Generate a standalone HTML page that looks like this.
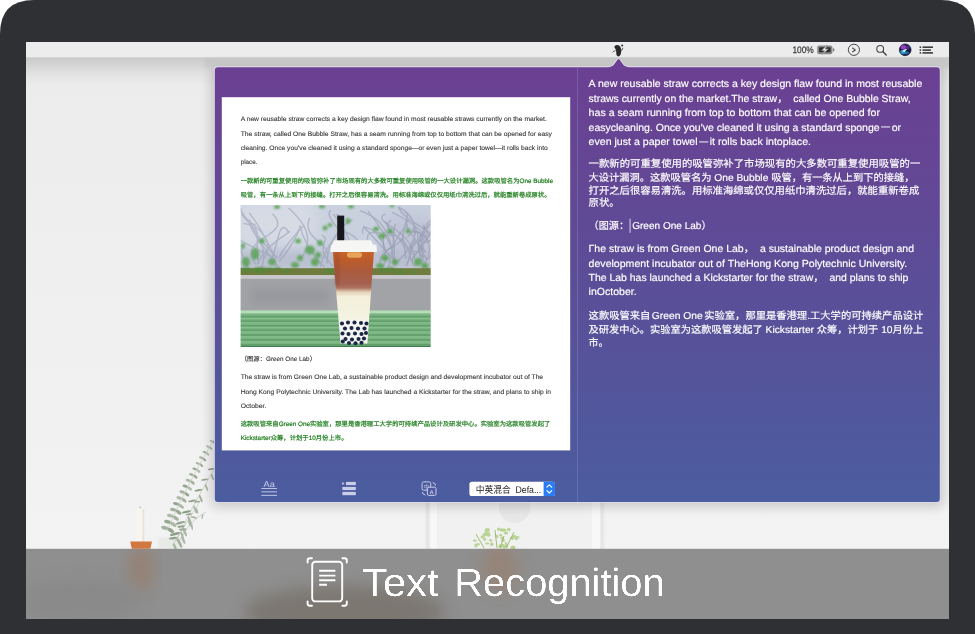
<!DOCTYPE html>
<html lang="en">
<head>
<meta charset="utf-8">
<title>Text Recognition</title>
<style>
html,body{margin:0;padding:0;background:#fff;}
body{width:975px;height:634px;overflow:hidden;}
svg{display:block;}
text{font-family:'Liberation Sans','Noto Sans CJK SC',sans-serif;white-space:pre;text-rendering:geometricPrecision;}
</style>
</head>
<body>
<svg width="975" height="634" viewBox="0 0 975 634">
<defs>
<linearGradient id="pg" x1="0" y1="0" x2="0" y2="1">
<stop offset="0" stop-color="#6c3f92"/>
<stop offset="0.45" stop-color="#5d4c97"/>
<stop offset="1" stop-color="#4b5d9f"/>
</linearGradient>
<linearGradient id="wallTop" x1="0" y1="0" x2="0" y2="1">
<stop offset="0" stop-color="#c9c9c9"/>
<stop offset="0.25" stop-color="#d3d3d3"/>
<stop offset="0.6" stop-color="#e2e2e2"/>
<stop offset="1" stop-color="#ececec"/>
</linearGradient>
<linearGradient id="wall" x1="0" y1="0" x2="0" y2="1">
<stop offset="0" stop-color="#ebebeb"/>
<stop offset="0.35" stop-color="#efefef"/>
<stop offset="0.8" stop-color="#f2f2f2"/>
<stop offset="1" stop-color="#f4f4f4"/>
</linearGradient>
<radialGradient id="siri" cx="0.5" cy="0.5" r="0.5">
<stop offset="0" stop-color="#e9e6ff"/>
<stop offset="0.3" stop-color="#7f6ee0"/>
<stop offset="0.7" stop-color="#2b2a86"/>
<stop offset="1" stop-color="#15153e"/>
</radialGradient>
<filter id="b2" x="-50%" y="-50%" width="200%" height="200%"><feGaussianBlur stdDeviation="2"/></filter>
<filter id="b3" x="-5%" y="-5%" width="110%" height="110%"><feGaussianBlur stdDeviation="2.6"/></filter>
<filter id="b8s" x="-5%" y="-8%" width="110%" height="116%"><feGaussianBlur stdDeviation="6"/></filter>
<filter id="b4" x="-50%" y="-50%" width="200%" height="200%"><feGaussianBlur stdDeviation="4"/></filter>
<filter id="b8" x="-50%" y="-50%" width="200%" height="200%"><feGaussianBlur stdDeviation="8"/></filter>
<filter id="b05" x="-20%" y="-20%" width="140%" height="140%"><feGaussianBlur stdDeviation="0.5"/></filter>
<filter id="b1" x="-20%" y="-20%" width="140%" height="140%"><feGaussianBlur stdDeviation="1"/></filter>
<clipPath id="screen"><rect x="26" y="42" width="923" height="577"/></clipPath>
<clipPath id="photo"><rect x="240.6" y="205" width="190.1" height="142"/></clipPath>
<clipPath id="banner"><rect x="26" y="548.6" width="923" height="70.4"/></clipPath>
<linearGradient id="cup" x1="0" y1="250" x2="0" y2="343.6" gradientUnits="userSpaceOnUse">
<stop offset="0" stop-color="#c9672c"/>
<stop offset="0.1" stop-color="#bd5c29"/>
<stop offset="0.22" stop-color="#ab5a3c"/>
<stop offset="0.36" stop-color="#a5614f"/>
<stop offset="0.405" stop-color="#ad7462"/>
<stop offset="0.45" stop-color="#e2d2b8"/>
<stop offset="0.5" stop-color="#f3f0da"/>
<stop offset="0.74" stop-color="#f4f2e2"/>
<stop offset="0.76" stop-color="#f6f6f4"/>
<stop offset="1" stop-color="#f4f4f2"/>
</linearGradient>
<filter id="thin" x="-2%" y="-10%" width="104%" height="130%"><feGaussianBlur stdDeviation="0.75"/><feComponentTransfer><feFuncA type="linear" slope="2.6" intercept="-1.05"/></feComponentTransfer></filter>
<filter id="b07" x="-5%" y="-5%" width="110%" height="110%"><feGaussianBlur stdDeviation="0.75"/></filter>
<filter id="b03" x="-5%" y="-5%" width="110%" height="110%"><feGaussianBlur stdDeviation="0.35"/></filter>
</defs>

<path d="M0 634 V34 Q0 0 34 0 H941 Q975 0 975 34 V634 Z" fill="#2f3033"/>
<g clip-path="url(#screen)" opacity="0.999">
<rect x="26" y="42" width="923" height="577" fill="url(#wall)"/>
<rect x="26" y="57" width="923" height="28" fill="url(#wallTop)"/>
<rect x="429" y="495" width="172" height="60" fill="#f1f1f1"/>
<rect x="429.2" y="495" width="7.6" height="60" fill="#f8f8f8"/>
<rect x="591.8" y="495" width="8.8" height="60" fill="#f8f8f8"/>
<rect x="426" y="495" width="3.4" height="60" fill="#e2e2e2" filter="url(#b1)"/>
<rect x="600.6" y="495" width="3" height="60" fill="#e2e2e2" filter="url(#b1)"/>
<circle cx="514.5" cy="507.4" r="15.6" fill="#e7e7e7" filter="url(#b05)"/>
<g fill="#b1cf87" opacity="0.85" filter="url(#b05)">
<ellipse cx="484.7" cy="539.3" rx="1.6" ry="1.6"/>
<ellipse cx="502.2" cy="530.2" rx="1.2" ry="1.8"/>
<ellipse cx="485.7" cy="533.5" rx="2.4" ry="1.5"/>
<ellipse cx="511.6" cy="538.1" rx="2.0" ry="1.2"/>
<ellipse cx="502.6" cy="545.5" rx="1.8" ry="1.7"/>
<ellipse cx="504.2" cy="530.2" rx="2.1" ry="1.6"/>
<ellipse cx="487.6" cy="529.6" rx="2.2" ry="1.5"/>
<ellipse cx="506.3" cy="545.7" rx="2.1" ry="1.9"/>
<ellipse cx="491.8" cy="544.2" rx="1.7" ry="1.9"/>
<ellipse cx="513.5" cy="536.9" rx="1.4" ry="1.2"/>
<ellipse cx="517.4" cy="537.3" rx="2.0" ry="1.3"/>
<ellipse cx="496.8" cy="536.3" rx="1.6" ry="1.6"/>
<ellipse cx="500.3" cy="546.2" rx="2.0" ry="1.9"/>
<ellipse cx="512.5" cy="547.8" rx="2.0" ry="1.2"/>
<ellipse cx="512.7" cy="547.3" rx="2.3" ry="1.6"/>
<ellipse cx="506.1" cy="533.0" rx="2.2" ry="1.6"/>
<ellipse cx="486.8" cy="530.2" rx="2.2" ry="2.0"/>
<ellipse cx="478.0" cy="544.2" rx="1.7" ry="1.2"/>
<ellipse cx="487.2" cy="543.6" rx="2.2" ry="1.0"/>
<ellipse cx="501.7" cy="529.9" rx="2.1" ry="1.3"/>
<ellipse cx="513.6" cy="547.6" rx="1.8" ry="2.0"/>
<ellipse cx="487.9" cy="530.5" rx="1.9" ry="1.0"/>
<ellipse cx="482.9" cy="536.8" rx="1.9" ry="1.2"/>
<ellipse cx="475.9" cy="545.5" rx="1.6" ry="2.0"/>
<ellipse cx="514.3" cy="536.2" rx="1.8" ry="1.5"/>
<ellipse cx="503.0" cy="540.3" rx="1.9" ry="1.6"/>
<ellipse cx="516.3" cy="538.6" rx="1.7" ry="1.7"/>
<ellipse cx="484.7" cy="534.7" rx="2.4" ry="1.5"/>
<ellipse cx="498.7" cy="529.2" rx="1.7" ry="1.6"/>
<ellipse cx="474.9" cy="540.7" rx="2.0" ry="1.1"/>
<ellipse cx="502.2" cy="537.9" rx="2.0" ry="1.4"/>
<ellipse cx="505.8" cy="543.0" rx="1.2" ry="1.1"/>
<ellipse cx="504.4" cy="547.3" rx="1.5" ry="1.5"/>
<ellipse cx="500.7" cy="535.1" rx="1.6" ry="1.3"/>
<ellipse cx="490.6" cy="540.3" rx="1.6" ry="1.4"/>
<ellipse cx="508.8" cy="529.5" rx="1.9" ry="1.7"/>
<ellipse cx="488.0" cy="533.2" rx="2.2" ry="1.2"/>
<ellipse cx="482.4" cy="537.3" rx="2.0" ry="1.1"/>
<ellipse cx="488.5" cy="535.3" rx="2.2" ry="1.4"/>
<ellipse cx="512.5" cy="538.2" rx="1.6" ry="1.7"/>
</g>
<g fill="none" stroke="#93b766" stroke-width="0.9" filter="url(#b05)"><path d="M484 548 L476 534"/><path d="M497 548 L495 530"/><path d="M506 548 L514 532"/><path d="M500 548 L504 536"/></g>
<g filter="url(#b05)">
<path d="M135.8 541.8 V511 Q135.8 508.4 138 508.2 H142.2 Q144.4 508.4 144.4 511 V541.8 Z" fill="#f7f5f0"/>
<rect x="142.4" y="509" width="2" height="33" fill="#e4e0d8" opacity="0.8"/>
<rect x="139.8" y="506.4" width="0.7" height="2" fill="#9a9a9a"/>
<path d="M130.2 541.6 H152 L150.4 548.8 H131.8 Z" fill="#d1773f"/>
</g>
<rect x="158" y="537" width="26" height="12" rx="2" fill="#e6e9e6" opacity="0.8" filter="url(#b1)"/>
<g filter="url(#b05)" opacity="0.78">
<path d="M167 531 Q188 482 215 438" fill="none" stroke="#a9b3a3" stroke-width="0.6"/>
<ellipse cx="164.7" cy="527.8" rx="3.6" ry="1.9" transform="rotate(11 164.7 527.8)" fill="#8fa189"/>
<ellipse cx="170.9" cy="530.5" rx="3.6" ry="1.9" transform="rotate(35 170.9 530.5)" fill="#7d9277"/>
<ellipse cx="167.5" cy="521.8" rx="3.4" ry="1.8" transform="rotate(12 167.5 521.8)" fill="#7d9277"/>
<ellipse cx="173.4" cy="524.4" rx="3.4" ry="1.8" transform="rotate(36 173.4 524.4)" fill="#9aab94"/>
<ellipse cx="170.3" cy="515.7" rx="3.3" ry="1.7" transform="rotate(12 170.3 515.7)" fill="#9aab94"/>
<ellipse cx="176.0" cy="518.3" rx="3.3" ry="1.7" transform="rotate(36 176.0 518.3)" fill="#8fa189"/>
<ellipse cx="173.2" cy="509.7" rx="3.2" ry="1.7" transform="rotate(13 173.2 509.7)" fill="#8fa189"/>
<ellipse cx="178.7" cy="512.3" rx="3.2" ry="1.7" transform="rotate(37 178.7 512.3)" fill="#7d9277"/>
<ellipse cx="176.1" cy="503.8" rx="3.1" ry="1.6" transform="rotate(13 176.1 503.8)" fill="#7d9277"/>
<ellipse cx="181.3" cy="506.3" rx="3.1" ry="1.6" transform="rotate(37 181.3 506.3)" fill="#9aab94"/>
<ellipse cx="179.1" cy="497.9" rx="2.9" ry="1.6" transform="rotate(14 179.1 497.9)" fill="#9aab94"/>
<ellipse cx="184.1" cy="500.3" rx="2.9" ry="1.6" transform="rotate(38 184.1 500.3)" fill="#8fa189"/>
<ellipse cx="182.1" cy="492.0" rx="2.8" ry="1.5" transform="rotate(14 182.1 492.0)" fill="#8fa189"/>
<ellipse cx="186.9" cy="494.4" rx="2.8" ry="1.5" transform="rotate(38 186.9 494.4)" fill="#7d9277"/>
<ellipse cx="185.1" cy="486.2" rx="2.7" ry="1.4" transform="rotate(15 185.1 486.2)" fill="#7d9277"/>
<ellipse cx="189.7" cy="488.5" rx="2.7" ry="1.4" transform="rotate(39 189.7 488.5)" fill="#9aab94"/>
<ellipse cx="188.2" cy="480.4" rx="2.6" ry="1.4" transform="rotate(15 188.2 480.4)" fill="#9aab94"/>
<ellipse cx="192.6" cy="482.6" rx="2.6" ry="1.4" transform="rotate(39 192.6 482.6)" fill="#8fa189"/>
<ellipse cx="191.4" cy="474.6" rx="2.4" ry="1.3" transform="rotate(16 191.4 474.6)" fill="#8fa189"/>
<ellipse cx="195.5" cy="476.8" rx="2.4" ry="1.3" transform="rotate(40 195.5 476.8)" fill="#7d9277"/>
<ellipse cx="194.6" cy="468.9" rx="2.3" ry="1.2" transform="rotate(17 194.6 468.9)" fill="#7d9277"/>
<ellipse cx="198.5" cy="471.0" rx="2.3" ry="1.2" transform="rotate(41 198.5 471.0)" fill="#9aab94"/>
<ellipse cx="197.8" cy="463.3" rx="2.2" ry="1.2" transform="rotate(17 197.8 463.3)" fill="#9aab94"/>
<ellipse cx="201.5" cy="465.3" rx="2.2" ry="1.2" transform="rotate(41 201.5 465.3)" fill="#8fa189"/>
<ellipse cx="201.1" cy="457.6" rx="2.1" ry="1.1" transform="rotate(18 201.1 457.6)" fill="#8fa189"/>
<ellipse cx="204.5" cy="459.6" rx="2.1" ry="1.1" transform="rotate(42 204.5 459.6)" fill="#7d9277"/>
<ellipse cx="204.5" cy="452.1" rx="2.0" ry="1.0" transform="rotate(18 204.5 452.1)" fill="#7d9277"/>
<ellipse cx="207.7" cy="453.9" rx="2.0" ry="1.0" transform="rotate(42 207.7 453.9)" fill="#9aab94"/>
<ellipse cx="207.8" cy="446.5" rx="1.8" ry="1.0" transform="rotate(19 207.8 446.5)" fill="#9aab94"/>
<ellipse cx="210.8" cy="448.3" rx="1.8" ry="1.0" transform="rotate(43 210.8 448.3)" fill="#8fa189"/>
<ellipse cx="211.3" cy="441.0" rx="1.7" ry="0.9" transform="rotate(19 211.3 441.0)" fill="#8fa189"/>
<ellipse cx="214.0" cy="442.7" rx="1.7" ry="0.9" transform="rotate(43 214.0 442.7)" fill="#7d9277"/>
<path d="M176 541 Q194 502 216 466" fill="none" stroke="#a2ad9c" stroke-width="0.6"/>
<ellipse cx="179.5" cy="543.0" rx="5.3" ry="1.4" transform="rotate(65 179.5 543.0)" fill="#90a28a"/>
<ellipse cx="174.9" cy="534.0" rx="5.2" ry="1.3" transform="rotate(-195 174.9 534.0)" fill="#6f8768"/>
<ellipse cx="184.6" cy="531.7" rx="5.0" ry="1.3" transform="rotate(66 184.6 531.7)" fill="#9bab95"/>
<ellipse cx="180.5" cy="522.8" rx="4.9" ry="1.3" transform="rotate(-194 180.5 522.8)" fill="#7f9478"/>
<ellipse cx="189.8" cy="520.6" rx="4.7" ry="1.2" transform="rotate(67 189.8 520.6)" fill="#90a28a"/>
<ellipse cx="186.3" cy="511.8" rx="4.6" ry="1.2" transform="rotate(-193 186.3 511.8)" fill="#6f8768"/>
<ellipse cx="195.2" cy="509.5" rx="4.4" ry="1.1" transform="rotate(68 195.2 509.5)" fill="#9bab95"/>
<ellipse cx="192.3" cy="500.9" rx="4.2" ry="1.1" transform="rotate(-192 192.3 500.9)" fill="#7f9478"/>
<ellipse cx="200.8" cy="498.6" rx="4.1" ry="1.1" transform="rotate(69 200.8 498.6)" fill="#90a28a"/>
<ellipse cx="198.4" cy="490.2" rx="3.9" ry="1.0" transform="rotate(-191 198.4 490.2)" fill="#6f8768"/>
<ellipse cx="206.6" cy="487.7" rx="3.8" ry="1.0" transform="rotate(70 206.6 487.7)" fill="#9bab95"/>
<ellipse cx="204.7" cy="479.6" rx="3.6" ry="0.9" transform="rotate(-190 204.7 479.6)" fill="#7f9478"/>
<ellipse cx="212.5" cy="477.0" rx="3.5" ry="0.9" transform="rotate(71 212.5 477.0)" fill="#90a28a"/>
<ellipse cx="211.2" cy="469.1" rx="3.3" ry="0.9" transform="rotate(-189 211.2 469.1)" fill="#6f8768"/>
<path d="M172 546 Q186 524 202 498" fill="none" stroke="#a2ad9c" stroke-width="0.6"/>
<ellipse cx="175.1" cy="547.5" rx="4.5" ry="1.3" transform="rotate(72 175.1 547.5)" fill="#98a992"/>
<ellipse cx="173.1" cy="538.2" rx="4.3" ry="1.2" transform="rotate(-188 173.1 538.2)" fill="#7a9072"/>
<ellipse cx="182.2" cy="535.7" rx="4.0" ry="1.1" transform="rotate(72 182.2 535.7)" fill="#98a992"/>
<ellipse cx="180.9" cy="526.5" rx="3.8" ry="1.1" transform="rotate(-188 180.9 526.5)" fill="#7a9072"/>
<ellipse cx="189.5" cy="523.4" rx="3.6" ry="1.0" transform="rotate(72 189.5 523.4)" fill="#98a992"/>
<ellipse cx="188.9" cy="514.3" rx="3.3" ry="0.9" transform="rotate(-188 188.9 514.3)" fill="#7a9072"/>
<ellipse cx="197.0" cy="510.6" rx="3.1" ry="0.9" transform="rotate(72 197.0 510.6)" fill="#98a992"/>
<ellipse cx="197.2" cy="501.7" rx="2.9" ry="0.8" transform="rotate(-188 197.2 501.7)" fill="#7a9072"/>
<path d="M180 540 Q190 520 206 512" fill="none" stroke="#a2ad9c" stroke-width="0.6"/>
<ellipse cx="183.5" cy="540.1" rx="4.2" ry="1.2" transform="rotate(69 183.5 540.1)" fill="#9bab95"/>
<ellipse cx="182.7" cy="529.4" rx="3.9" ry="1.1" transform="rotate(-184 182.7 529.4)" fill="#8a9d84"/>
<ellipse cx="191.9" cy="526.5" rx="3.5" ry="1.0" transform="rotate(83 191.9 526.5)" fill="#9bab95"/>
<ellipse cx="193.8" cy="517.3" rx="3.2" ry="0.9" transform="rotate(-169 193.8 517.3)" fill="#8a9d84"/>
<ellipse cx="202.4" cy="516.5" rx="2.8" ry="0.8" transform="rotate(99 202.4 516.5)" fill="#9bab95"/>
</g>
<rect x="26" y="42" width="923" height="16" fill="#ececec"/>
<rect x="26" y="57.5" width="923" height="0.8" fill="#c2c2c2"/>
<g fill="#2a2a2a">
<path d="M614.6 46.2 C616.2 44.4 619.4 44.8 620.6 47.4 C621.8 50 621.4 54.4 619.4 56 C618.2 57 616.8 56.2 616.4 54.6 C616 52.6 616.6 50.6 615.4 48.8 C614.8 47.9 614 47.2 614.6 46.2 Z"/>
<circle cx="622.2" cy="45.6" r="1"/>
<path d="M620.8 50.6 Q622.8 50.2 622.8 47.8" fill="none" stroke="#2a2a2a" stroke-width="0.7"/>
<path d="M615.6 50.6 Q613.6 50.8 612.6 52.4" fill="none" stroke="#2a2a2a" stroke-width="0.7"/>
</g>
<text x="792.4" y="53.4" font-size="9.4" fill="#3e3e3e" textLength="21.4" lengthAdjust="spacingAndGlyphs" stroke="#3e3e3e" stroke-width="0.25">100%</text>
<rect x="817.2" y="45.4" width="15.2" height="8.8" rx="1.8" fill="#8b8b8b"/>
<rect x="819.1" y="47.3" width="11.5" height="5" rx="0.6" fill="#2e2e2e"/>
<rect x="832.8" y="48.3" width="1.5" height="3.2" rx="0.7" fill="#7a7a7a"/>
<path d="M827.2 45.3 L821.6 50.5 H824.6 L822.4 54.3 L828.2 49.1 H825.2 Z" fill="#f8f8f8" stroke="#8b8b8b" stroke-width="0.8" stroke-linejoin="round"/>
<circle cx="853.9" cy="49.8" r="5.6" fill="none" stroke="#484848" stroke-width="1"/>
<path d="M852.3 47.8 L855.2 49.9 L852.3 52" fill="none" stroke="#484848" stroke-width="1.15"/>
<circle cx="880.2" cy="48.9" r="3.4" fill="none" stroke="#444" stroke-width="1.1"/>
<path d="M882.8 51.5 L886.2 54.9" stroke="#444" stroke-width="1.4" stroke-linecap="round"/>
<circle cx="905.2" cy="49.8" r="5.9" fill="#17173f"/>
<g filter="url(#b05)">
<ellipse cx="903.4" cy="47.2" rx="2.8" ry="2.2" fill="#a843c4" opacity="0.9"/>
<ellipse cx="903.0" cy="52.0" rx="2.8" ry="2.2" fill="#2fa6d8" opacity="0.9"/>
<ellipse cx="906.6" cy="52.8" rx="2.4" ry="1.6" fill="#2c8fb0" opacity="0.7"/>
<ellipse cx="907.8" cy="47.6" rx="2.0" ry="1.8" fill="#4a3aa8" opacity="0.8"/>
<path d="M902.2 51.4 Q904.6 48.2 907.4 49.2 Q905.6 49.8 904.8 51.8 Z" fill="#ffffff" opacity="0.9"/>
</g>
<circle cx="905.2" cy="49.8" r="5.9" fill="none" stroke="#17173f" stroke-width="0.8" opacity="0.8"/>
<g fill="#3c3c3c"><rect x="919.6" y="46.4" width="1.5" height="1.6"/><rect x="922.5" y="46.4" width="10.5" height="1.6"/><rect x="919.6" y="49.3" width="1.5" height="1.6"/><rect x="922.5" y="49.3" width="8.4" height="1.6"/><rect x="919.6" y="52.1" width="1.5" height="1.6"/><rect x="922.5" y="52.1" width="10.5" height="1.6"/></g>
<rect x="211" y="66" width="733" height="441" rx="6" fill="#000" opacity="0.17" filter="url(#b8s)"/>
<rect x="205" y="58" width="745" height="9.4" fill="#c6c6c6" opacity="0.75" filter="url(#b1)"/>
<path d="M218 67.2 H607.6 Q612.4 67.2 614.8 63.4 L617.5 59.7 Q618.6 58.3 619.7 59.7 L622.4 63.4 Q624.8 67.2 629.6 67.2 H936.6 Q939.8 67.2 939.8 70.4 V498.8 Q939.8 502 936.6 502 H218 Q214.8 502 214.8 498.8 V70.4 Q214.8 67.2 218 67.2 Z" fill="url(#pg)" stroke="#e3dcee" stroke-opacity="0.95" stroke-width="1.7" paint-order="stroke" stroke-linejoin="round"/>
<rect x="577.1" y="67.2" width="0.8" height="434.8" fill="#8a86c0" opacity="0.55"/>
<rect x="221.8" y="97.2" width="348.4" height="353.2" fill="#ffffff"/>
<g clip-path="url(#photo)">
<g filter="url(#b03)">
<rect x="236" y="200" width="200" height="76" fill="#c9d1df"/>
<rect x="236" y="200" width="80" height="45" fill="#d6dbe4" filter="url(#b8)"/>
<rect x="385" y="215" width="55" height="45" fill="#c0c5d6" filter="url(#b8)"/>
<rect x="236" y="250" width="200" height="20" fill="#b4b9ca" opacity="0.7" filter="url(#b4)"/>
<g fill="none" stroke="#979bb4" stroke-width="1.4" opacity="0.55" filter="url(#b07)">
<path d="M327.0 263.4 C327.4 245.6 336.7 227.9 352.5 219.5"/>
<path d="M360.4 266.9 C340.0 253.3 345.7 211.5 336.1 214.8"/>
<path d="M426.7 269.5 C409.5 225.5 437.3 212.1 435.9 223.9"/>
<path d="M277.8 258.6 C274.8 254.5 250.5 232.4 249.6 219.5"/>
<path d="M336.0 264.9 C360.8 259.8 350.4 234.8 333.4 214.1"/>
<path d="M301.3 258.4 C314.6 239.0 305.9 223.5 288.6 208.0"/>
<path d="M422.1 267.7 C442.6 241.4 416.2 223.9 392.1 212.1"/>
<path d="M255.7 264.4 C235.1 236.6 295.6 236.5 272.4 213.8"/>
<path d="M264.2 258.7 C279.0 231.2 243.2 225.7 240.2 207.7"/>
<path d="M277.8 266.0 C258.7 239.7 241.3 219.4 255.7 224.7"/>
<path d="M424.5 267.1 C410.1 238.8 430.5 232.5 412.8 231.7"/>
<path d="M260.9 269.8 C274.5 236.5 233.5 212.6 243.7 213.5"/>
<path d="M258.9 263.7 C252.5 240.9 266.5 226.9 243.5 223.4"/>
<path d="M350.0 268.0 C370.4 253.6 318.5 216.6 331.0 210.5"/>
<path d="M381.0 269.1 C400.1 246.1 358.9 213.6 362.8 233.6"/>
<path d="M249.3 269.4 C237.1 253.8 238.4 220.3 233.6 226.4"/>
<path d="M275.0 265.8 C277.9 254.8 254.8 219.8 249.1 212.6"/>
<path d="M414.5 258.1 C411.7 227.1 369.3 222.9 385.5 213.8"/>
<path d="M349.6 257.0 C373.6 248.0 350.9 230.5 341.3 231.8"/>
<path d="M268.4 255.5 C278.4 258.7 215.5 232.3 239.5 232.4"/>
<path d="M332.7 266.0 C311.4 244.1 333.6 241.5 321.8 235.0"/>
<path d="M380.6 265.6 C373.2 249.0 418.2 240.5 398.2 232.5"/>
<path d="M320.4 266.9 C326.7 238.4 346.4 231.3 342.2 222.6"/>
<path d="M257.1 264.6 C268.5 238.6 298.4 230.3 286.7 231.5"/>
<path d="M324.8 267.6 C301.3 246.0 298.9 218.1 299.8 227.8"/>
<path d="M373.3 262.5 C361.1 225.4 370.2 233.7 380.2 232.7"/>
<path d="M280.1 257.5 C277.2 256.2 295.8 233.3 304.4 225.1"/>
<path d="M279.3 261.5 C298.3 238.5 301.8 221.1 297.7 232.5"/>
<path d="M267.6 262.4 C278.2 258.3 276.7 215.9 287.8 230.6"/>
<path d="M326.7 259.1 C333.0 242.3 300.3 239.4 309.6 218.0"/>
</g>
<g fill="none" stroke="#9094ad" stroke-width="1.4" opacity="0.55" filter="url(#b07)">
<path d="M429.1 259.0 C447.7 226.5 408.6 229.1 398.2 207.1"/>
<path d="M394.1 265.8 C391.8 225.9 376.6 216.8 360.1 210.6"/>
<path d="M385.3 250.9 C391.8 247.9 400.3 243.5 384.9 221.2"/>
<path d="M413.6 254.0 C389.1 241.5 415.4 214.6 404.7 212.1"/>
<path d="M392.2 256.9 C397.9 251.5 390.2 237.3 395.5 223.7"/>
<path d="M425.1 251.7 C406.6 240.9 447.7 241.7 441.4 230.6"/>
<path d="M397.6 261.4 C419.8 241.2 418.5 215.6 411.0 233.1"/>
<path d="M415.5 266.4 C401.2 256.5 439.9 244.2 415.8 230.4"/>
<path d="M405.9 265.8 C423.7 237.2 367.7 224.3 388.5 236.9"/>
<path d="M406.6 265.4 C422.1 227.2 413.4 214.4 398.4 207.0"/>
<path d="M395.4 265.8 C396.2 250.3 385.1 233.5 368.1 211.1"/>
<path d="M427.2 259.9 C413.2 243.4 433.9 235.0 444.4 208.9"/>
<path d="M411.2 260.5 C401.8 238.3 439.9 241.3 422.6 225.0"/>
<path d="M388.8 267.0 C392.5 232.0 408.9 226.6 407.1 223.8"/>
<path d="M409.5 250.6 C404.5 253.0 430.9 226.2 427.8 223.5"/>
<path d="M413.9 251.3 C436.8 257.3 397.0 225.5 408.6 220.1"/>
<path d="M384.6 258.7 C383.4 236.1 379.0 230.9 394.5 236.6"/>
<path d="M426.1 252.6 C410.8 233.0 443.3 219.9 434.0 206.8"/>
<path d="M396.5 262.4 C377.6 242.9 354.8 215.3 367.2 230.9"/>
<path d="M405.6 258.7 C407.0 230.6 376.5 231.4 391.2 220.1"/>
<path d="M411.2 260.6 C429.0 233.1 435.1 238.0 423.0 226.8"/>
<path d="M424.9 256.3 C410.8 259.9 426.6 213.0 407.3 237.4"/>
</g>
<g fill="#58a353" opacity="0.85" filter="url(#b1)">
<ellipse cx="277" cy="207" rx="3" ry="2"/>
<ellipse cx="322" cy="206.5" rx="3" ry="2"/>
<ellipse cx="351" cy="206.5" rx="3" ry="2"/>
<ellipse cx="392" cy="206" rx="2.5" ry="1.5"/>
<ellipse cx="262" cy="241" rx="3" ry="2.5"/>
<ellipse cx="298" cy="241" rx="3" ry="2.5"/>
<ellipse cx="310" cy="250" rx="5" ry="4.5"/>
<ellipse cx="320" cy="243" rx="3" ry="3"/>
<ellipse cx="325" cy="228" rx="2.5" ry="2.5"/>
<ellipse cx="330" cy="225" rx="2.5" ry="2"/>
<ellipse cx="348" cy="221" rx="2.5" ry="3"/>
<ellipse cx="376" cy="229" rx="3" ry="2.5"/>
<ellipse cx="382" cy="236" rx="3.5" ry="3"/>
<ellipse cx="390" cy="231" rx="3" ry="2.5"/>
<ellipse cx="408" cy="231" rx="2.5" ry="2.5"/>
<ellipse cx="255" cy="254" rx="4" ry="6"/>
<ellipse cx="246" cy="262" rx="4" ry="5"/>
<ellipse cx="272" cy="262" rx="3.5" ry="3.5"/>
<ellipse cx="295" cy="265" rx="4" ry="3"/>
<ellipse cx="315" cy="262" rx="4" ry="4"/>
<ellipse cx="385" cy="258" rx="4" ry="3"/>
<ellipse cx="395" cy="262" rx="3.5" ry="3"/>
<ellipse cx="418" cy="262" rx="4" ry="4"/>
<ellipse cx="425" cy="266" rx="3.5" ry="3"/>
<ellipse cx="380" cy="266" rx="4" ry="3"/>
<ellipse cx="243" cy="246" rx="2" ry="3"/>
<ellipse cx="300" cy="258" rx="3" ry="3"/>
<ellipse cx="318" cy="255" rx="3" ry="3"/>
</g>
<rect x="236" y="268.2" width="200" height="7" fill="#6f7b3c" filter="url(#b05)"/>
<g fill="#4f8a3a" opacity="0.8" filter="url(#b1)">
<ellipse cx="287.0" cy="271.0" rx="4.0" ry="1.6"/>
<ellipse cx="260.2" cy="271.4" rx="4.7" ry="1.6"/>
<ellipse cx="390.5" cy="268.9" rx="4.6" ry="1.6"/>
<ellipse cx="245.3" cy="269.2" rx="5.7" ry="1.6"/>
<ellipse cx="413.3" cy="271.9" rx="3.5" ry="1.6"/>
<ellipse cx="384.5" cy="270.3" rx="5.7" ry="1.6"/>
<ellipse cx="277.5" cy="268.7" rx="3.4" ry="1.6"/>
<ellipse cx="249.0" cy="270.4" rx="5.1" ry="1.6"/>
<ellipse cx="269.6" cy="269.1" rx="3.8" ry="1.6"/>
<ellipse cx="400.0" cy="272.0" rx="6.7" ry="1.6"/>
<ellipse cx="259.9" cy="268.7" rx="6.8" ry="1.6"/>
<ellipse cx="328.9" cy="271.2" rx="4.3" ry="1.6"/>
<ellipse cx="329.8" cy="270.3" rx="4.7" ry="1.6"/>
</g>
<rect x="236" y="275" width="200" height="36" fill="#a2a3a7"/>
<rect x="236" y="275" width="200" height="3.8" fill="#c7c7cc"/>
<rect x="250" y="287" width="80" height="18" fill="#999a9f" filter="url(#b4)"/>
<rect x="236" y="310.6" width="200" height="37" fill="#78b380"/>
<rect x="236" y="310.4" width="200" height="3" fill="#b6dcb8"/>
<rect x="236" y="315.90000000000003" width="200" height="1.6" fill="#558f60" opacity="0.6"/>
<rect x="236" y="317.8" width="200" height="1.2" fill="#92cb97" opacity="0.5"/>
<rect x="236" y="320.40000000000003" width="200" height="1.6" fill="#558f60" opacity="0.6"/>
<rect x="236" y="322.3" width="200" height="1.2" fill="#92cb97" opacity="0.5"/>
<rect x="236" y="324.90000000000003" width="200" height="1.6" fill="#558f60" opacity="0.6"/>
<rect x="236" y="326.8" width="200" height="1.2" fill="#92cb97" opacity="0.5"/>
<rect x="236" y="329.5" width="200" height="1.6" fill="#558f60" opacity="0.6"/>
<rect x="236" y="331.4" width="200" height="1.2" fill="#92cb97" opacity="0.5"/>
<rect x="236" y="334.3" width="200" height="1.6" fill="#558f60" opacity="0.6"/>
<rect x="236" y="336.2" width="200" height="1.2" fill="#92cb97" opacity="0.5"/>
<rect x="236" y="339.20000000000005" width="200" height="1.6" fill="#558f60" opacity="0.6"/>
<rect x="236" y="341.1" width="200" height="1.2" fill="#92cb97" opacity="0.5"/>
<rect x="236" y="344.0" width="200" height="1.6" fill="#558f60" opacity="0.6"/>
<rect x="236" y="345.9" width="200" height="1.2" fill="#92cb97" opacity="0.5"/>
<rect x="236" y="345.8" width="200" height="2" fill="#3f7f4c"/>
<g filter="url(#b05)">
<rect x="337.2" y="215.6" width="7" height="26" fill="#16161c"/>
<path d="M332.7 250 L374 250 L367.4 343.6 L340.5 343.6 Z" fill="url(#cup)"/>
<rect x="347" y="252.2" width="15" height="5.5" rx="2.4" fill="#eeb061" opacity="0.85" filter="url(#b05)"/>
<rect x="334.5" y="252" width="5" height="34" fill="#7d3f2a" opacity="0.25" filter="url(#b1)"/>
<circle cx="342" cy="323.5" r="2.05" fill="#1b2644"/>
<circle cx="348" cy="322.5" r="2.05" fill="#1b2644"/>
<circle cx="354.5" cy="322.5" r="2.05" fill="#1b2644"/>
<circle cx="361" cy="323" r="2.05" fill="#1b2644"/>
<circle cx="366.5" cy="323.5" r="2.05" fill="#1b2644"/>
<circle cx="345" cy="328.5" r="2.05" fill="#1b2644"/>
<circle cx="351.5" cy="328" r="2.05" fill="#1b2644"/>
<circle cx="358" cy="328.5" r="2.05" fill="#1b2644"/>
<circle cx="364.5" cy="328.5" r="2.05" fill="#1b2644"/>
<circle cx="342.5" cy="333.5" r="2.05" fill="#1b2644"/>
<circle cx="348.5" cy="334" r="2.05" fill="#1b2644"/>
<circle cx="355" cy="333.5" r="2.05" fill="#1b2644"/>
<circle cx="361.5" cy="334" r="2.05" fill="#1b2644"/>
<circle cx="366" cy="333" r="2.05" fill="#1b2644"/>
<circle cx="345.5" cy="339" r="2.05" fill="#1b2644"/>
<circle cx="352" cy="339.5" r="2.05" fill="#1b2644"/>
<circle cx="358.5" cy="339" r="2.05" fill="#1b2644"/>
<circle cx="364" cy="338.5" r="2.05" fill="#1b2644"/>
<circle cx="342.8" cy="341.5" r="2.05" fill="#1b2644"/>
<circle cx="349" cy="343" r="2.05" fill="#1b2644"/>
<circle cx="355.5" cy="343.2" r="2.05" fill="#1b2644"/>
<circle cx="361.5" cy="342.8" r="2.05" fill="#1b2644"/>
<path d="M330.4 251.9 L330.8 246.2 Q331 244.7 332.6 244.2 L333.4 241.4 Q333.8 240.2 335.4 240.2 L369.6 240.2 Q371.2 240.2 371.6 241.4 L372.6 244.2 Q376.4 244.7 376.6 246.2 L377 251.9 Z" fill="#f6f6f4"/>
</g>
</g>
</g>
<g opacity="0.999"><g><text x="240.7" y="121.3" font-size="6.5" fill="#383838" textLength="306.1" lengthAdjust="spacingAndGlyphs" stroke="#383838" stroke-width="0.12">A new reusable straw corrects a key design flaw found in most reusable straws currently on the market.</text>
<text x="240.7" y="135.6" font-size="6.5" fill="#383838" textLength="311.3" lengthAdjust="spacingAndGlyphs" stroke="#383838" stroke-width="0.12">The straw, called One Bubble Straw, has a seam running from top to bottom that can be opened for easy</text>
<text x="240.7" y="149.9" font-size="6.5" fill="#383838" textLength="307.1" lengthAdjust="spacingAndGlyphs" stroke="#383838" stroke-width="0.12">cleaning. Once you’ve cleaned it using a standard sponge—or even just a paper towel—it rolls back into</text>
<text x="240.7" y="164.2" font-size="6.5" fill="#383838" textLength="16.8" lengthAdjust="spacingAndGlyphs" stroke="#383838" stroke-width="0.12">place.</text>
<text x="240.7" y="182.6" font-size="6.3" fill="#1e7e1e" textLength="312.3" lengthAdjust="spacingAndGlyphs" stroke="#1e7e1e" stroke-width="0.2">一款新的可重复使用的吸管弥补了市场现有的大多数可重复使用吸管的一大设计漏洞。这款吸管名为One Bubble</text>
<text x="240.7" y="196.9" font-size="6.3" fill="#1e7e1e" textLength="309.8" lengthAdjust="spacingAndGlyphs" stroke="#1e7e1e" stroke-width="0.2">吸管，有一条从上到下的接缝。打开之后很容易清洗。用标准海绵或仅仅用纸巾清洗过后，就能重新卷成原状。</text>
<text x="240.7" y="361.1" font-size="6.3" fill="#383838" textLength="75.3" lengthAdjust="spacingAndGlyphs" stroke="#383838" stroke-width="0.12">（图源：Green One Lab）</text>
<text x="240.7" y="379.2" font-size="6.5" fill="#383838" textLength="302.4" lengthAdjust="spacingAndGlyphs" stroke="#383838" stroke-width="0.12">The straw is from Green One Lab, a sustainable product design and development incubator out of The</text>
<text x="240.7" y="393.6" font-size="6.5" fill="#383838" textLength="310.2" lengthAdjust="spacingAndGlyphs" stroke="#383838" stroke-width="0.12">Hong Kong Polytechnic University. The Lab has launched a Kickstarter for the straw, and plans to ship in</text>
<text x="240.7" y="407.9" font-size="6.5" fill="#383838" textLength="25.6" lengthAdjust="spacingAndGlyphs" stroke="#383838" stroke-width="0.12">October.</text>
<text x="240.7" y="426.0" font-size="6.3" fill="#1e7e1e" textLength="309.6" lengthAdjust="spacingAndGlyphs" stroke="#1e7e1e" stroke-width="0.2">这款吸管来自Green One实验室，那里是香港理工大学的可持续产品设计及研发中心。实验室为这款吸管发起了</text>
<text x="240.7" y="440.3" font-size="6.3" fill="#1e7e1e" textLength="106.8" lengthAdjust="spacingAndGlyphs" stroke="#1e7e1e" stroke-width="0.2">Kickstarter众筹，计划于10月份上市。</text></g></g>
<g opacity="0.999"><g><text x="588.6" y="87.3" font-size="10.3" fill="#ffffff" textLength="333.7" lengthAdjust="spacingAndGlyphs" stroke="#ffffff" stroke-width="0.16">A new reusable straw corrects a key design flaw found in most reusable</text>
<text x="588.6" y="101.7" font-size="10.3" fill="#ffffff" textLength="322.0" lengthAdjust="spacingAndGlyphs" stroke="#ffffff" stroke-width="0.16">straws currently on the market.The straw，  called One Bubble Straw,</text>
<text x="588.6" y="116.1" font-size="10.3" fill="#ffffff" textLength="291.4" lengthAdjust="spacingAndGlyphs" stroke="#ffffff" stroke-width="0.16">has a seam running from top to bottom that can be opened for</text>
<text x="588.6" y="130.5" font-size="10.3" fill="#ffffff" textLength="312.4" lengthAdjust="spacingAndGlyphs" stroke="#ffffff" stroke-width="0.16">easycleaning. Once you've cleaned it using a standard sponge<tspan font-size='8.6' dx='1.6' dy='-1.3'>—</tspan><tspan dx='1.6' dy='1.3'>or</tspan></text>
<text x="588.6" y="144.9" font-size="10.3" fill="#ffffff" textLength="222.4" lengthAdjust="spacingAndGlyphs" stroke="#ffffff" stroke-width="0.16">even just a paper towel<tspan font-size='8.6' dx='1.6' dy='-1.3'>—</tspan><tspan dx='1.6' dy='1.3'>it</tspan> rolls back intoplace.</text>
<text x="588.6" y="167.0" font-size="10.0" fill="#ffffff" textLength="331.7" lengthAdjust="spacingAndGlyphs" stroke="#ffffff" stroke-width="0.16">一款新的可重复使用的吸管弥补了市场现有的大多数可重复使用吸管的一</text>
<text x="588.6" y="180.5" font-size="10.0" fill="#ffffff" textLength="325.9" lengthAdjust="spacingAndGlyphs" stroke="#ffffff" stroke-width="0.16">大设计漏洞。这款吸管名为 One Bubble 吸管，有一条从上到下的接缝，</text>
<text x="588.6" y="194.4" font-size="10.0" fill="#ffffff" textLength="330.7" lengthAdjust="spacingAndGlyphs" stroke="#ffffff" stroke-width="0.16">打开之后很容易清洗。用标准海绵或仅仅用纸巾清洗过后，就能重新卷成</text>
<text x="588.6" y="206.4" font-size="10.0" fill="#ffffff" textLength="30.9" lengthAdjust="spacingAndGlyphs" stroke="#ffffff" stroke-width="0.16">原状。</text>
<text x="588.6" y="228.8" font-size="10.0" fill="#ffffff" textLength="40.4" lengthAdjust="spacingAndGlyphs" stroke="#ffffff" stroke-width="0.16">（图源：</text>
<text x="632.2" y="228.8" font-size="10.0" fill="#ffffff" textLength="79.3" lengthAdjust="spacingAndGlyphs" stroke="#ffffff" stroke-width="0.16">Green One Lab）</text>
<rect x="629.6" y="218.6" width="0.9" height="14.2" fill="#e6e2f4"/>
<text x="588.6" y="252.2" font-size="10.3" fill="#ffffff" textLength="325.4" lengthAdjust="spacingAndGlyphs" stroke="#ffffff" stroke-width="0.16">Γhe straw is from Green One Lab，  a sustainable product design and</text>
<text x="588.6" y="266.6" font-size="10.3" fill="#ffffff" textLength="318.7" lengthAdjust="spacingAndGlyphs" stroke="#ffffff" stroke-width="0.16">development incubator out of TheHong Kong Polytechnic University.</text>
<text x="588.6" y="281.0" font-size="10.3" fill="#ffffff" textLength="319.8" lengthAdjust="spacingAndGlyphs" stroke="#ffffff" stroke-width="0.16">The Lab has launched a Kickstarter for the straw，  and plans to ship</text>
<text x="588.6" y="295.4" font-size="10.3" fill="#ffffff" textLength="48.0" lengthAdjust="spacingAndGlyphs" stroke="#ffffff" stroke-width="0.16">inOctober.</text>
<text x="588.6" y="318.8" font-size="10.0" fill="#ffffff" textLength="334.7" lengthAdjust="spacingAndGlyphs" stroke="#ffffff" stroke-width="0.16">这款吸管来自<tspan dx='1.4'>Green One</tspan><tspan dx='1.4'>实验室，那里是香港理.工大学的可持续产品设计</tspan></text>
<text x="588.6" y="332.5" font-size="10.0" fill="#ffffff" textLength="334.7" lengthAdjust="spacingAndGlyphs" stroke="#ffffff" stroke-width="0.16">及研发中心。实验室为这款吸管发起了 Kickstarter 众筹，计划于 10月份上</text>
<text x="588.6" y="346.2" font-size="10.0" fill="#ffffff" textLength="19.9" lengthAdjust="spacingAndGlyphs" stroke="#ffffff" stroke-width="0.16">市。</text></g></g>
<g fill="#c9cdea">
<text x="263.6" y="487.0" font-size="8.6" fill="#c9cdea" textLength="11.2" lengthAdjust="spacingAndGlyphs">Aa</text>
<rect x="261.4" y="488.0" width="15.6" height="0.9"/><rect x="261.4" y="491.4" width="15.6" height="0.9"/><rect x="261.4" y="494.9" width="15.6" height="0.9"/>
<path d="M342.2 481.9 L344.6 483.4 L342.2 484.9 Z"/><rect x="346" y="481.9" width="9.8" height="3.2"/><rect x="342.4" y="486.9" width="13.4" height="3.2"/><rect x="342.4" y="491.9" width="13.4" height="3.3"/>
</g>
<g fill="none" stroke="#c9cdea" stroke-width="1">
<rect x="422.1" y="481.9" width="8.6" height="8.2" rx="1.4"/>
<rect x="427.4" y="487.2" width="8.6" height="8.2" rx="1.4" fill="#515b9f"/>
<path d="M432.6 482.6 Q435.4 482.8 435.6 485.6"/><path d="M425.4 495 Q422.6 494.8 422.4 492"/>
</g>
<text x="423.8" y="488.6" font-size="5.6" fill="#c9cdea" textLength="5.2" lengthAdjust="spacingAndGlyphs">中</text>
<text x="429.8" y="493.8" font-size="5.6" fill="#c9cdea" textLength="3.8" lengthAdjust="spacingAndGlyphs" font-weight="bold">A</text>
<rect x="469.4" y="481.8" width="85.6" height="14.2" rx="2.6" fill="#ffffff"/>
<path d="M543.6 481.8 H552.4 Q555 481.8 555 484.4 V493.4 Q555 496 552.4 496 H543.6 Z" fill="#2a7cf6"/>
<path d="M546.9 487.2 L549.3 484.8 L551.7 487.2 M546.9 490.6 L549.3 493 L551.7 490.6" fill="none" stroke="#ffffff" stroke-width="1.1" stroke-linecap="round" stroke-linejoin="round"/>
<text x="475.8" y="492.6" font-size="9.6" fill="#1e1e1e" textLength="65.4" lengthAdjust="spacingAndGlyphs">中英混合  Defa...</text>
<g clip-path="url(#banner)">
<rect x="26" y="548.6" width="923" height="70.4" fill="#8f8f8f"/>
<ellipse cx="141" cy="568" rx="11" ry="22" fill="#a26c4a" opacity="0.42" filter="url(#b8)"/>
<ellipse cx="345" cy="612" rx="100" ry="26" fill="#6f685d" opacity="0.6" filter="url(#b8)"/>
<ellipse cx="500" cy="568" rx="18" ry="24" fill="#a07658" opacity="0.4" filter="url(#b8)"/>
<ellipse cx="80" cy="600" rx="60" ry="20" fill="#868686" opacity="0.6" filter="url(#b8)"/>
</g>
<g fill="none" stroke="#ffffff" stroke-width="1.9" stroke-linecap="round">
<rect x="312.2" y="561.8" width="30" height="39.6" rx="3.2"/>
<path d="M307.6 562.6 V560.4 Q307.6 558.2 309.8 558.2 H312"/><path d="M346.8 562.6 V560.4 Q346.8 558.2 344.6 558.2 H342.4"/>
<path d="M307.6 601.4 V603.6 Q307.6 605.8 309.8 605.8 H312"/><path d="M346.8 601.4 V603.6 Q346.8 605.8 344.6 605.8 H342.4"/>
<path d="M319.2 570.8 H335.4 M319.2 575.6 H335.4 M319.2 580.3 H335.4 M319.2 584.8 H327" stroke-width="1.9" stroke-linecap="butt"/>
</g>
<text x="362.0" y="595.8" font-size="39.4" fill="#ffffff" filter="url(#thin)"><tspan textLength="76.6" lengthAdjust="spacingAndGlyphs">Text</tspan><tspan> </tspan><tspan x="454.3" textLength="210.4" lengthAdjust="spacingAndGlyphs">Recognition</tspan></text>
</g>
</svg>
</body>
</html>
